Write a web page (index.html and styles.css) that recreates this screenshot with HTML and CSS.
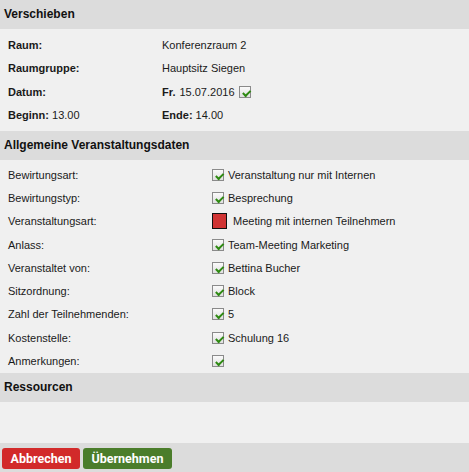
FILE: index.html
```html
<!DOCTYPE html>
<html>
  <head>
    <title>Verschieben</title>
    <link rel="stylesheet" href="styles.css">
  </head>
  <body>
    <div class="section-head">Verschieben</div>
    <div class="section-body move">
      <div class="row"><span class="label strong">Raum:</span><span>Konferenzraum 2</span></div>
      <div class="row"><span class="label strong">Raumgruppe:</span><span>Hauptsitz Siegen</span></div>
      <div class="row">
        <span class="label strong">Datum:</span>
        <span class="value"><b>Fr.</b> 15.07.2016 <i class="check"></i></span>
      </div>
      <div class="row">
        <span class="label"><b>Beginn:</b> 13.00</span>
        <span><b>Ende:</b> 14.00</span>
      </div>
    </div>

    <div class="section-head">Allgemeine Veranstaltungsdaten</div>
    <div class="section-body general">
      <div class="row"><span class="label">Bewirtungsart:</span><span class="value"><i class="check"></i>Veranstaltung nur mit Internen</span></div>
      <div class="row"><span class="label">Bewirtungstyp:</span><span class="value"><i class="check"></i>Besprechung</span></div>
      <div class="row"><span class="label">Veranstaltungsart:</span><span class="value"><i class="swatch"></i>Meeting mit internen Teilnehmern</span></div>
      <div class="row"><span class="label">Anlass:</span><span class="value"><i class="check"></i>Team-Meeting Marketing</span></div>
      <div class="row"><span class="label">Veranstaltet von:</span><span class="value"><i class="check"></i>Bettina Bucher</span></div>
      <div class="row"><span class="label">Sitzordnung:</span><span class="value"><i class="check"></i>Block</span></div>
      <div class="row"><span class="label">Zahl der Teilnehmenden:</span><span class="value"><i class="check"></i>5</span></div>
      <div class="row"><span class="label">Kostenstelle:</span><span class="value"><i class="check"></i>Schulung 16</span></div>
      <div class="row"><span class="label">Anmerkungen:</span><span class="value"><i class="check"></i></span></div>
    </div>

    <div class="section-head">Ressourcen</div>
    <div class="section-body empty"></div>

    <div class="actions">
      <button class="btn btn-cancel">Abbrechen</button>
      <button class="btn btn-ok">Übernehmen</button>
    </div>
  </body>
</html>
```

FILE: styles.css
```css
* {
  margin: 0;
  padding: 0;
  box-sizing: border-box;
}

body {
  font-family: "Liberation Sans", Arial, sans-serif;
  font-size: 11px;
  color: #1a1a1a;
  background-color: #f0f0f0;
  width: 469px;
  height: 472px;
  overflow: hidden;
}

.section-head {
  background-color: #dcdcdc;
  font-weight: bold;
  font-size: 12px;
  color: #111;
  height: 29px;
  line-height: 28px;
  padding-left: 4px;
}

.section-body {
  padding: 4px 0 4px 8px;
}

.row {
  display: grid;
  align-items: center;
  height: 23.5px;
}

.move .row {
  grid-template-columns: 154px 1fr;
}

.general {
  padding-top: 3px;
  padding-bottom: 0;
}

.general .row {
  grid-template-columns: 204px 1fr;
  height: 23.3px;
}

.strong,
.move b {
  font-weight: bold;
}

.value {
  display: flex;
  align-items: center;
  gap: 4px;
}

.check {
  display: inline-block;
  width: 12px;
  height: 12px;
  border: 1px solid #8a8a8a;
  background: linear-gradient(#fafafa, #e0e0e0);
  position: relative;
  flex-shrink: 0;
}

.check::after {
  content: "";
  position: absolute;
  left: 2px;
  top: 1px;
  width: 6px;
  height: 3px;
  border-left: 2px solid #2e8a12;
  border-bottom: 2px solid #2e8a12;
  transform: rotate(-45deg) translate(-1px, 2px);
}

.swatch {
  display: inline-block;
  width: 15px;
  height: 16px;
  background-color: #d03434;
  border: 1px solid #111;
  margin-right: 2px;
  flex-shrink: 0;
}

.empty {
  height: 41px;
}

.actions {
  background-color: #dcdcdc;
  height: 30px;
  padding: 5px 0 0 2px;
  display: flex;
  gap: 3px;
}

.btn {
  font-family: Roboto, "Liberation Sans", sans-serif;
  font-weight: bold;
  font-size: 12.5px;
  color: #fff;
  border: none;
  border-radius: 3px;
  height: 21px;
  padding: 0 7px;
  cursor: pointer;
}

.btn-cancel {
  background-color: #d22a2a;
  width: 78px;
}

.btn-ok {
  background-color: #4b7d2b;
  width: 89px;
}
```
